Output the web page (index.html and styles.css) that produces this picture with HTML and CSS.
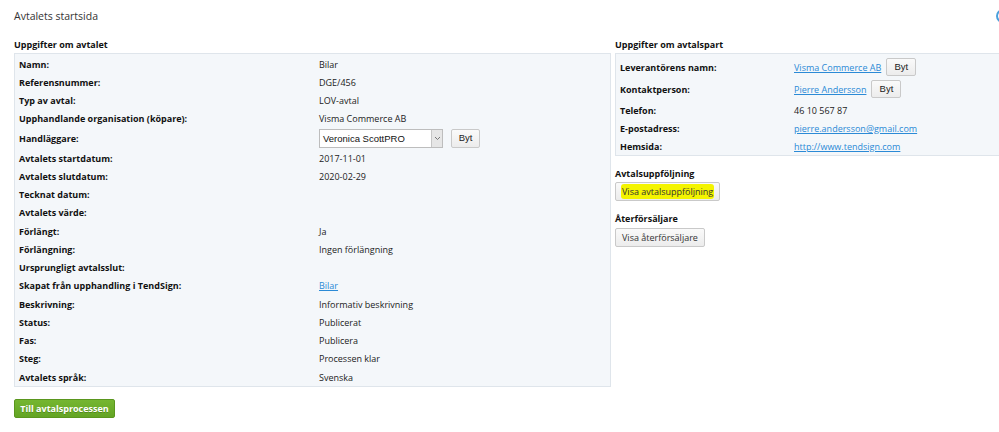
FILE: index.html
```html
<!DOCTYPE html>
<html lang="sv">
<head>
<meta charset="utf-8">
<title>Avtalets startsida</title>
<link rel="stylesheet" href="styles.css">
</head>
<body>
<div class="page">
  <div class="titlebar">
    <h1 class="title">Avtalets startsida</h1>
    <span class="help-icon"></span>
  </div>
  <div class="columns">
    <div class="col-left">
      <h2 class="sec-head">Uppgifter om avtalet</h2>
      <div class="box box-left">
        <div class="row"><div class="lbl">Namn:</div><div class="val">Bilar</div></div>
        <div class="row"><div class="lbl">Referensnummer:</div><div class="val">DGE/456</div></div>
        <div class="row"><div class="lbl">Typ av avtal:</div><div class="val">LOV-avtal</div></div>
        <div class="row"><div class="lbl">Upphandlande organisation (köpare):</div><div class="val">Visma Commerce AB</div></div>
        <div class="row row-tall"><div class="lbl">Handläggare:</div><div class="val">
          <div class="select"><span class="select-text">Veronica ScottPRO</span><span class="select-arrow"><svg width="7" height="5" viewBox="0 0 7 5"><path d="M1 1 L3.5 3.5 L6 1" fill="none" stroke="#777" stroke-width="1"/></svg></span></div>
          <button class="btn btn-byt">Byt</button>
        </div></div>
        <div class="row"><div class="lbl">Avtalets startdatum:</div><div class="val">2017-11-01</div></div>
        <div class="row"><div class="lbl">Avtalets slutdatum:</div><div class="val">2020-02-29</div></div>
        <div class="row"><div class="lbl">Tecknat datum:</div><div class="val"></div></div>
        <div class="row"><div class="lbl">Avtalets värde:</div><div class="val"></div></div>
        <div class="row"><div class="lbl">Förlängt:</div><div class="val">Ja</div></div>
        <div class="row"><div class="lbl">Förlängning:</div><div class="val">Ingen förlängning</div></div>
        <div class="row"><div class="lbl">Ursprungligt avtalsslut:</div><div class="val"></div></div>
        <div class="row"><div class="lbl">Skapat från upphandling i TendSign:</div><div class="val"><a href="#" class="link">Bilar</a></div></div>
        <div class="row"><div class="lbl">Beskrivning:</div><div class="val">Informativ beskrivning</div></div>
        <div class="row"><div class="lbl">Status:</div><div class="val">Publicerat</div></div>
        <div class="row"><div class="lbl">Fas:</div><div class="val">Publicera</div></div>
        <div class="row"><div class="lbl">Steg:</div><div class="val">Processen klar</div></div>
        <div class="row"><div class="lbl">Avtalets språk:</div><div class="val">Svenska</div></div>
      </div>
      <button class="btn-green">Till avtalsprocessen</button>
    </div>
    <div class="col-right">
      <h2 class="sec-head">Uppgifter om avtalspart</h2>
      <div class="box box-right">
        <div class="rrow rrow-tall"><div class="rlbl">Leverantörens namn:</div><div class="rval"><a href="#" class="link">Visma Commerce AB</a><button class="btn btn-byt2">Byt</button></div></div>
        <div class="rrow rrow-tall"><div class="rlbl">Kontaktperson:</div><div class="rval"><a href="#" class="link">Pierre Andersson</a><button class="btn btn-byt2">Byt</button></div></div>
        <div class="rrow rrow-gap"><div class="rlbl">Telefon:</div><div class="rval">46 10 567 87</div></div>
        <div class="rrow"><div class="rlbl">E-postadress:</div><div class="rval"><a href="#" class="link">pierre.andersson@gmail.com</a></div></div>
        <div class="rrow"><div class="rlbl">Hemsida:</div><div class="rval"><a href="#" class="link">http://www.tendsign.com</a></div></div>
      </div>
      <h2 class="sec-head sec-sub">Avtalsuppföljning</h2>
      <button class="btn btn-wide btn-follow"><span class="hl">Visa avtalsuppföljning</span></button>
      <h2 class="sec-head sec-sub2">Återförsäljare</h2>
      <button class="btn btn-wide">Visa återförsäljare</button>
    </div>
  </div>
</div>
</body>
</html>
```

FILE: styles.css
```css
html, body {
  margin: 0;
  padding: 0;
  background: #ffffff;
  overflow: hidden;
}
body {
  font-family: "Open Sans", "DejaVu Sans", sans-serif;
  font-size: 9px;
  color: #222;
  width: 999px;
  height: 432px;
}
.page {
  padding: 0 0 0 14px;
}
.titlebar {
  display: flex;
  justify-content: space-between;
  align-items: center;
  height: 32px;
}
.title {
  margin: 0;
  font-size: 10.5px;
  font-weight: 400;
  color: #333;
  line-height: 16px;
}
.help-icon {
  width: 10px;
  height: 10px;
  border: 2px solid #4aa0dc;
  border-radius: 50%;
  margin-right: -11px;
  flex: none;
}
.columns {
  display: grid;
  grid-template-columns: 597px 400px;
  column-gap: 4px;
}
.sec-head {
  margin: 0;
  font-size: 9px;
  font-weight: 700;
  color: #111;
  line-height: 14px;
  padding-top: 6px;
  padding-bottom: 1px;
}
.box {
  background: #f4f7fa;
  border: 1px solid #dfe5eb;
  box-sizing: border-box;
}
.box-left {
  padding: 1px 0 0 4px;
}
.row {
  display: flex;
  align-items: center;
  height: 18px;
}
.row-tall {
  height: 22px;
}
.row-tall ~ .row {
  height: 18.25px;
}
.lbl {
  width: 300px;
  font-weight: 700;
  color: #111;
  flex: none;
}
.val {
  display: flex;
  align-items: center;
  color: #222;
}
.link {
  color: #2b8ad6;
  text-decoration: underline;
}
.select {
  width: 124px;
  height: 19px;
  box-sizing: border-box;
  border: 1px solid #bdbdbd;
  background: #fff;
  display: flex;
  align-items: center;
  justify-content: space-between;
  font-family: "Liberation Sans", Arial, sans-serif;
  font-size: 9.5px;
  color: #111;
}
.select-text {
  padding-left: 3px;
}
.select-arrow {
  width: 10px;
  height: 17px;
  background: #e6e6e6;
  border-left: 1px solid #c6c6c6;
  display: flex;
  align-items: center;
  justify-content: center;
}
.btn {
  font-family: "Liberation Sans", Arial, sans-serif;
  font-size: 9.5px;
  color: #222;
  background: linear-gradient(#fafafa, #ececec);
  border: 1px solid #c9c9c9;
  border-radius: 2px;
  height: 18px;
  padding: 0 6px;
  line-height: 16px;
  box-sizing: border-box;
  cursor: pointer;
}
.btn-byt {
  margin-left: 8px;
  width: 29px;
  height: 19px;
  padding: 0;
}
.btn-byt2 {
  margin-left: 5px;
  width: 30px;
  padding: 0;
}
.btn-green {
  margin-top: 12px;
  font-family: "Open Sans", "DejaVu Sans", sans-serif;
  font-size: 9px;
  font-weight: 700;
  color: #fff;
  white-space: nowrap;
  text-shadow: 0 1px 0 rgba(0,0,0,0.2);
  background: linear-gradient(#75b631, #63a424);
  border: 1px solid #5a961e;
  border-radius: 2px;
  height: 19px;
  width: 101px;
  padding: 0;
  line-height: 17px;
  cursor: pointer;
}
.box-right {
  padding: 2px 0 0 4px;
  height: 103px;
}
.rrow {
  display: flex;
  align-items: center;
  height: 18px;
}
.rrow-tall {
  height: 22px;
}
.rrow-gap {
  margin-top: 1px;
}
.rlbl {
  width: 174px;
  flex: none;
  font-weight: 700;
  color: #111;
}
.rval {
  display: flex;
  align-items: center;
  color: #222;
}
.sec-sub {
  padding-top: 11px;
  padding-bottom: 1px;
}
.sec-sub2 {
  padding-top: 11px;
  padding-bottom: 2px;
}
.btn-wide {
  font-family: "Open Sans", "DejaVu Sans", sans-serif;
  height: 19px;
  padding: 0 6px;
  font-size: 9px;
  line-height: 17px;
  color: #333;
}
.btn-follow {
  padding: 0 5px;
}
.hl {
  background: #f4f400;
  border-radius: 3px;
  padding: 1px 1px;
}
```
